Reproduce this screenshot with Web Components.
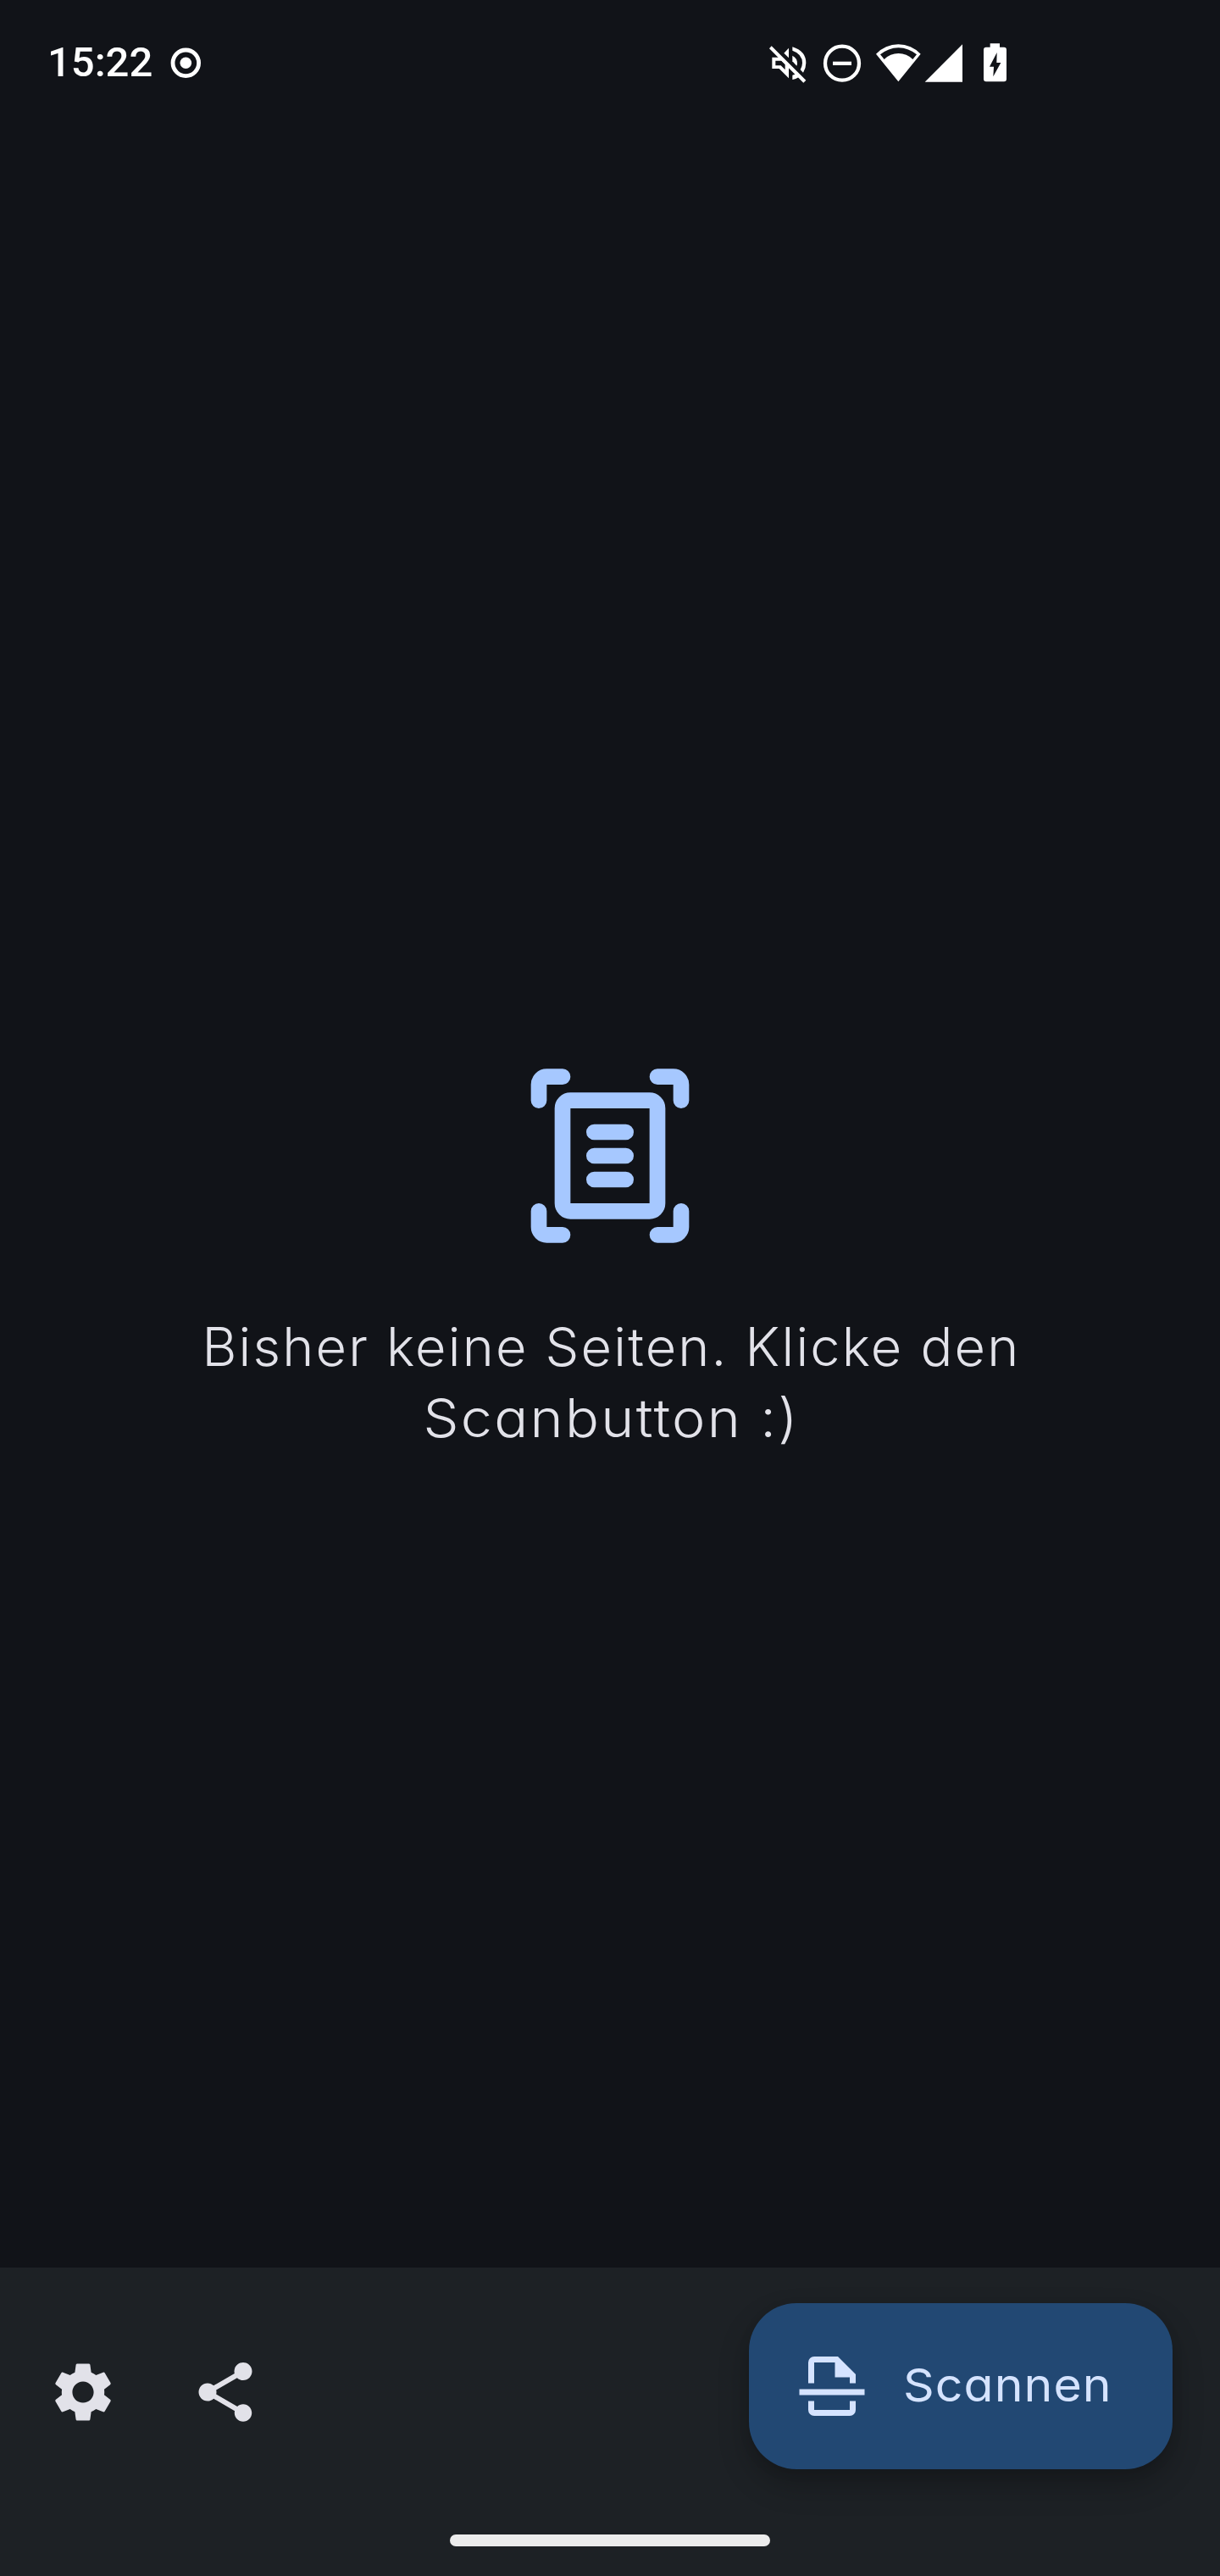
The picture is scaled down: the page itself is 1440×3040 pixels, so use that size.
<!DOCTYPE html>
<html lang="de">
<head>
<meta charset="utf-8">
<title>Scanner</title>
<style>
html, body { margin: 0; background: #111318; }
</style>
</head>
<body>
<scanner-app></scanner-app>
<script>
const define = (name, html) => customElements.define(name, class extends HTMLElement {
  constructor() {
    super();
    const t = document.createElement('template');
    t.innerHTML = html;
    this.attachShadow({ mode: 'open' }).appendChild(t.content.cloneNode(true));
  }
});

define('status-bar', `
<style>
:host { display: flex; justify-content: space-between; height: 150px; box-sizing: border-box; padding: 40px 240px 0 56px; color: #fff; font: 500 49px/68px Roboto, sans-serif; }
svg { display: block; fill: currentColor; height: 90px; margin-top: -10px; }
.left { display: flex; }
.time { letter-spacing: 0; }
</style>
<div class="left"><span class="time">15:22</span>
<svg width="60" height="90" viewBox="0 0 60 90" style="margin-left:9px"><circle cx="30.3" cy="44.3" r="15.3" fill="none" stroke="#fff" stroke-width="4.8"/><circle cx="30.3" cy="44.3" r="6.8"/></svg></div>
<svg width="310" height="90" viewBox="0 0 930 270">
<path d="M62 73L184 194L175 203L54 82Z"/>
<path fill-rule="evenodd" d="M64 113H94L123 142V187L89 153H64ZM76 125V142H95L110 157V138L97 125Z"/>
<path d="M123 80V115L106 98Z"/>
<path d="M136 107Q153 116 153 134Q153 139 151 143L136 127Z"/>
<path d="M136 76Q184 91 184 133Q184 151 174 167L164 157Q171 145 171 133Q171 101 136 89Z"/>
<path d="M136 176Q143 174 149 171L160 182Q150 189 136 192Z"/>
<circle cx="312" cy="134" r="60" fill="none" stroke="#fff" stroke-width="12.8"/>
<path d="M279 128H345V141H279Z"/>
<path fill-rule="evenodd" d="M511 199L432 101A108.8 108.8 0 0 1 590 101ZM447 103L461 120A71 71 0 0 1 562 120L576 103A98.7 98.7 0 0 0 447 103Z"/>
<path d="M605 200L738 67V200Z"/>
<path fill-rule="evenodd" d="M836 64H870V77H885Q894 77 894 86V190Q894 199 885 199H822Q813 199 813 190V86Q813 77 822 77H836ZM860 96L834 146H849L847 181L874 132H859Z"/>
</svg>`);

define('empty-state', `
<style>
:host { display: flex; flex: 1; flex-direction: column; align-items: center; padding-top: 1102px; box-sizing: border-box; color: #e2e2e9; }
svg { display: block; fill: none; stroke: #a6c8ff; stroke-width: 2; stroke-linecap: round; }
p { margin: 71px 0 0; padding-left: 3px; width: 1100px; text-align: center; font: 300 63px/84px Inter, sans-serif; font-feature-settings: "cv11" 1; letter-spacing: 2.2px; }
::slotted(.wide) { display: inline-block; transform: scaleX(1.055); }
</style>
<svg width="224" height="224" viewBox="0 0 24 24">
<path d="M3 5V3a1 1 0 0 1 1-1h2M18 2h2a1 1 0 0 1 1 1v2M3 19v2a1 1 0 0 0 1 1h2M18 22h2a1 1 0 0 0 1-1v-2"/>
<rect x="6" y="5" width="12" height="14" rx="1"/>
<path d="M10 9h4M10 12h4M10 15h4"/>
</svg>
<p><slot></slot></p>`);

define('scan-button', `
<style>
:host { display: flex; align-items: center; box-sizing: border-box; width: 500px; height: 196px; padding: 0 56px; border-radius: 56px; background: #224873; color: #d5e3ff; box-shadow: 0 18px 36px rgba(0,0,0,.24), 0 4px 14px rgba(0,0,0,.08); font: 400 54px/80px Inter, sans-serif; font-feature-settings: "cv11" 1; letter-spacing: 1px; }
svg { display: block; fill: currentColor; margin-right: 42px; flex: none; }
span { padding-bottom: 2px; transform: scaleX(1.06); transform-origin: left; }
</style>
<svg width="84" height="84" viewBox="0 0 24 24"><path fill-rule="evenodd" d="M4 11V4a2 2 0 0 1 2-2h8l6 6v3h-2V9h-5V4H6v7zM1 13h22v2H1zM4 17h2v3h12v-3h2v3a2 2 0 0 1-2 2H6a2 2 0 0 1-2-2z"/></svg>
<span><slot></slot></span>`);

define('bottom-bar', `
<style>
:host { display: flex; flex-direction: column; height: 364px; background: #1d2125; color: #e2e2e9; }
.row { display: flex; justify-content: space-between; padding: 42px 56px 0; height: 273px; box-sizing: content-box; }
.icons { display: flex; gap: 84px; padding-top: 63px; }
.icons svg { display: block; fill: currentColor; }
.home { width: 378px; height: 14px; border-radius: 7px; background: #ececec; margin: 0 auto 35px; flex: none; }
</style>
<div class="row"><div class="icons">
<svg width="84" height="84" viewBox="0 0 24 24"><path d="M19.14 12.94c.04-.3.06-.61.06-.94 0-.32-.02-.64-.07-.94l2.03-1.58c.18-.14.23-.41.12-.61l-1.92-3.32c-.12-.22-.37-.29-.59-.22l-2.39.96c-.5-.38-1.03-.7-1.62-.94l-.36-2.54c-.04-.24-.24-.41-.48-.41h-3.84c-.24 0-.43.17-.47.41l-.36 2.54c-.59.24-1.13.57-1.62.94l-2.39-.96c-.22-.08-.47 0-.59.22L2.74 8.87c-.12.21-.08.47.12.61l2.03 1.58c-.05.3-.09.63-.09.94s.02.64.07.94l-2.03 1.58c-.18.14-.23.41-.12.61l1.92 3.32c.12.22.37.29.59.22l2.39-.96c.5.38 1.03.7 1.62.94l.36 2.54c.05.24.24.41.48.41h3.84c.24 0 .44-.17.47-.41l.36-2.54c.59-.24 1.13-.56 1.62-.94l2.39.96c.22.08.47 0 .59-.22l1.92-3.32c.12-.22.07-.47-.12-.61l-2.01-1.58zM12 15.6c-1.98 0-3.6-1.62-3.6-3.6s1.62-3.6 3.6-3.6 3.6 1.62 3.6 3.6-1.62 3.6-3.6 3.6z"/></svg>
<svg width="84" height="84" viewBox="0 0 24 24"><path d="M18 16.08c-.76 0-1.44.3-1.96.77L8.91 12.7c.05-.23.09-.46.09-.7s-.04-.47-.09-.7l7.05-4.11c.54.5 1.25.81 2.04.81 1.66 0 3-1.34 3-3s-1.34-3-3-3-3 1.34-3 3c0 .24.04.47.09.7L8.04 9.81C7.5 9.31 6.79 9 6 9c-1.66 0-3 1.34-3 3s1.34 3 3 3c.79 0 1.5-.31 2.04-.81l7.12 4.16c-.05.21-.08.43-.08.65 0 1.61 1.31 2.92 2.92 2.92s2.92-1.31 2.92-2.92-1.31-2.92-2.92-2.92z"/></svg>
</div><scan-button>Scannen</scan-button></div>
<div class="home"></div>`);

define('scanner-app', `
<style>:host { display: flex; flex-direction: column; width: 1440px; height: 3040px; overflow: hidden; background: #111318; }</style>
<status-bar></status-bar>
<empty-state>Bisher keine Seiten. Klicke den<br><span class="wide">Scanbutton :)</span></empty-state>
<bottom-bar></bottom-bar>`);
</script>
</body>
</html>
